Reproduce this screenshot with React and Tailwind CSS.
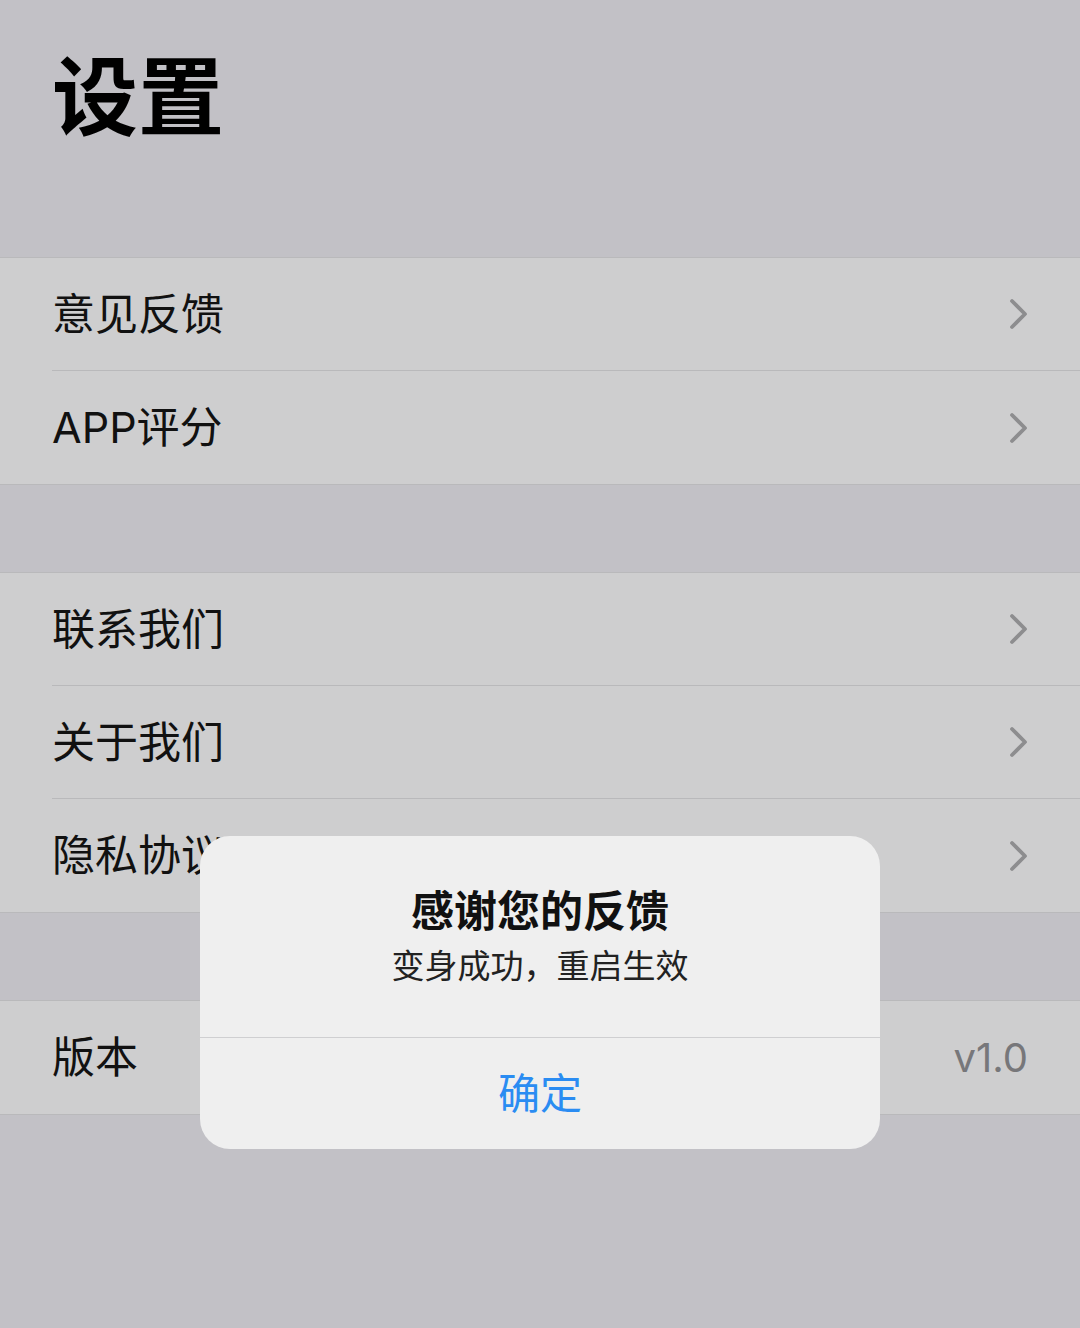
import React from 'react';

const font = { fontFamily: '"Inter", "Noto Sans CJK SC", sans-serif' };

const Chevron = () => (
    <svg width="20" height="32" viewBox="0 0 20 32" className="shrink-0">
        <polyline points="4,3 17,16 4,29" fill="none" stroke="#8d8d8f" strokeWidth="3.8" strokeLinecap="round" strokeLinejoin="round" />
    </svg>
);

const Row = ({ label, value, last }) => (
    <div className="pl-[52px] h-[113px] flex">
        <div className={`flex-1 flex items-center justify-between pr-[52px] ${last ? '' : 'border-b border-[#b9b9bb]'}`}>
            <span className="text-[43px] text-[#111] leading-none">{label}</span>
            {value ? (
                <span className="text-[40px] text-[#77777a] leading-none">{value}</span>
            ) : (
                <Chevron />
            )}
        </div>
    </div>
);

const Group = ({ items }) => (
    <div className="bg-[#cececf] border-y border-[#b9b9bb]">
        {items.map((it, i) => (
            <Row key={it.label} label={it.label} value={it.value} last={i === items.length - 1} />
        ))}
    </div>
);

export default function App() {
    return (
        <div className="relative w-[1080px] h-[1328px] bg-[#c2c1c6] overflow-hidden" style={font}>
            {/* Header */}
            <div className="h-[257px] pl-[52px] pt-[55px]">
                <h1 className="text-[86px] font-bold text-black leading-none">设置</h1>
            </div>

            <div className="flex flex-col gap-[87px]">
                <Group items={[{ label: '意见反馈' }, { label: 'APP评分' }]} />
                <Group items={[{ label: '联系我们' }, { label: '关于我们' }, { label: '隐私协议' }]} />
                <Group items={[{ label: '版本', value: 'v1.0' }]} />
            </div>

            {/* Alert */}
            <div className="absolute left-[200px] top-[836px] w-[680px] h-[313px] bg-[#efefef] rounded-[30px] flex flex-col">
                <div className="h-[202px] border-b border-[#cfcfd1] flex flex-col items-center pt-[54px]">
                    <div className="text-[43px] font-bold text-[#111] leading-none">感谢您的反馈</div>
                    <div className="text-[33px] text-[#222] leading-none mt-[17px]">变身成功，重启生效</div>
                </div>
                <div className="flex-1 flex items-center justify-center">
                    <span className="text-[42px] text-[#2a8cf2] leading-none">确定</span>
                </div>
            </div>
        </div>
    );
}
